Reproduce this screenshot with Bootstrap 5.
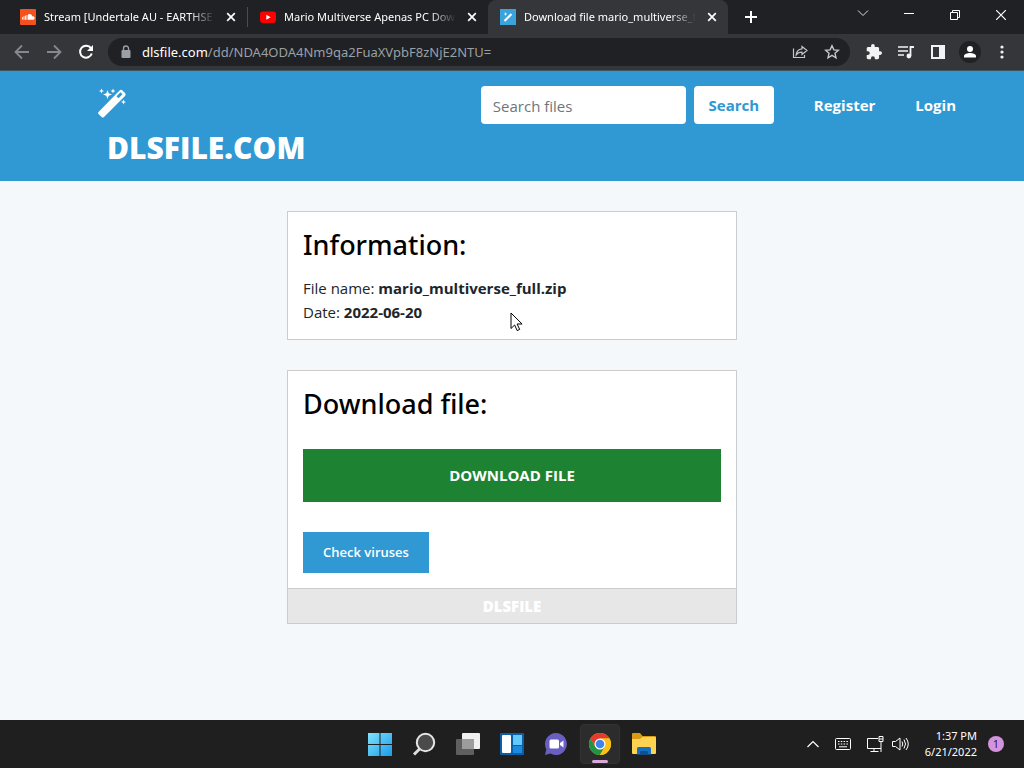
<!DOCTYPE html>
<html lang="en">
<head>
<meta charset="utf-8">
<meta name="viewport" content="width=device-width, initial-scale=1">
<title>Download file mario_multiverse_full.zip</title>
<link href="https://cdn.jsdelivr.net/npm/bootstrap@5.3.0/dist/css/bootstrap.min.css" rel="stylesheet">
<style>
  :root { --brand: #3098d2; --strip: #202124; --tool: #35363a; }
  body { font-family: "Open Sans", "Noto Sans", sans-serif; font-size: 15px; line-height: 24px; background: #f4f8fb; }
  svg { display: block; flex: none; }
  button { color: inherit; }
  .bare { background: none; border: 0; padding: 0; display: flex; align-items: center; justify-content: center; flex: none; }

  /* browser window */
  .tab-strip { background: var(--strip); height: 34px; color: #fff; font-size: 11px; font-family: "Noto Sans", "Open Sans", sans-serif; }
  .page-tab { flex: 0 1 240px; min-width: 0; height: 34px; padding: 0 8px 0 12px; gap: 8px; border-radius: 8px 8px 0 0; }
  .page-tab.divided { border-right: 1px solid #4a4c50; border-image: linear-gradient(transparent 8px, #4a4c50 8px, #4a4c50 26px, transparent 26px) 1; }
  .page-tab.active { background: var(--tool); }
  .tab-title { flex: 1 1 0; min-width: 0; overflow: hidden; white-space: nowrap; -webkit-mask-image: linear-gradient(90deg, #000 85%, transparent); mask-image: linear-gradient(90deg, #000 85%, transparent); }
  .win-btn { width: 46px; height: 28px; }
  .toolbar { background: var(--tool); height: 37px; color: #f1f3f4; padding: 0 6px; border-bottom: 1px solid #3d5560; }
  .tool-btn { width: 32px; height: 32px; }
  .address { background: var(--strip); border-radius: 14px; height: 28px; margin-left: 6px; padding: 0 2px 0 10px; }
  .url { font-size: 13px; font-family: "Noto Sans", "Open Sans", sans-serif; color: #9aa0a6; white-space: nowrap; overflow: hidden; text-decoration: none; }
  .url b { color: #fff; font-weight: 400; }
  .avatar { width: 22px; height: 22px; border-radius: 50%; background: var(--strip); }

  /* site */
  .site-header { background: var(--brand); min-height: 110px; }
  .header-inner { padding: 15px 48px 0 97px; }
  .brand-name { color: #fff; font-size: 30px; line-height: 36px; font-weight: 800; text-decoration: none; margin: 12px 0 0 10px; }
  .search-box { width: 205px; height: 38px; border: 0; border-radius: 4px; font-size: 15px; padding: 2px 12px 0; }
  .search-box::placeholder { color: #6c757d; }
  .search-btn, .search-btn:hover { width: 80px; height: 38px; border: 0; border-radius: 4px; background: #fff; color: var(--brand); font-size: 15px; font-weight: 700; padding: 0; }
  .site-link { color: #fff; font-size: 15px; font-weight: 700; text-decoration: none; line-height: 38px; padding: 0 20px; }
  .column-box { max-width: 450px; }
  .panel { background: #fff; border: 1px solid #ccc; margin-top: 30px; }
  .panel-body { padding: 15px; }
  .panel h2 { font-family: "Noto Sans", "Open Sans", sans-serif; font-size: 27px; line-height: 36px; font-weight: 500; color: #000; margin: 0 0 13px; }
  .download-btn, .download-btn:hover { height: 53px; margin: 27px 0 30px; border: 0; border-radius: 0; background: #1e8233; color: #fff; font-size: 15px; font-weight: 700; }
  .check-btn, .check-btn:hover { height: 41px; width: 126px; padding: 0; border: 0; border-radius: 0; background: var(--brand); color: #fff; font-size: 13px; font-weight: 600; }
  .panel-foot { background: #e7e7e7; border-top: 1px solid #ccc; color: #fff; font-size: 15px; font-weight: 800; line-height: 34px; }
  .pointer { position: absolute; left: 50%; top: 100px; margin-left: -2px; }

  /* desktop taskbar */
  .taskbar { background: #1f1f1f; height: 48px; color: #fff; }
  .side { flex: 1 1 0; min-width: 0; padding: 0 16px 0 8px; }
  .task-btn { width: 40px; height: 40px; border-radius: 4px; }
  .task-btn.open { background: #2c2c2c; border: 1px solid #333; position: relative; }
  .open-mark { position: absolute; bottom: 0; width: 16px; height: 3px; border-radius: 2px; background: #d9a9dc; }
  .clock { font-family: "Noto Sans", "Open Sans", sans-serif; font-size: 11px; line-height: 16px; text-align: right; }
  .count { width: 16px; height: 16px; border-radius: 50%; background: #d394dd; color: #2a1030; font-size: 11px; line-height: 16px; text-align: center; margin: 0 4px 0 11px; }
</style>
</head>
<body class="d-flex flex-column min-vh-100">

<div class="tab-strip d-flex align-items-center ps-2">
  <div class="page-tab divided d-flex align-items-center">
    <svg width="16" height="16" viewBox="0 0 16 16"><rect width="16" height="16" rx="1" fill="#f4511e"/><path d="M2.500 8v2.500M4 7.200v3.600M5.500 6.500v4.300M7 6v4.800" stroke="#fff" stroke-width=".9"/><path d="M8 5.400a3 3 0 0 1 4.300 2 1.750 1.750 0 1 1 .4 3.400H8z" fill="#fff"/></svg>
    <span class="tab-title">Stream [Undertale AU - EARTHSE</span>
    <button class="bare" aria-label="Close tab"><svg width="16" height="16" viewBox="0 0 16 16"><path d="M4.200 4.200l7.600 7.600M11.800 4.200l-7.600 7.600" stroke="#fff" stroke-width="1.700"/></svg></button>
  </div>
  <div class="page-tab d-flex align-items-center">
    <svg width="16" height="16" viewBox="0 0 16 16"><rect y="2.500" width="16" height="11.500" rx="3" fill="#f00"/><path d="M6.300 5.800v5L10.700 8.300z" fill="#fff"/></svg>
    <span class="tab-title">Mario Multiverse Apenas PC Dow</span>
    <button class="bare" aria-label="Close tab"><svg width="16" height="16" viewBox="0 0 16 16"><path d="M4.200 4.200l7.600 7.600M11.800 4.200l-7.600 7.600" stroke="#fff" stroke-width="1.700"/></svg></button>
  </div>
  <div class="page-tab active d-flex align-items-center">
    <svg width="16" height="16" viewBox="0 0 16 16"><rect width="16" height="16" fill="#3ba3dc"/><path d="M4.500 12L11.500 5" stroke="#fff" stroke-width="2.200"/><path d="M5.500 3.500v3M4 5h3" stroke="#fff" stroke-width=".7"/></svg>
    <span class="tab-title">Download file mario_multiverse_f</span>
    <button class="bare" aria-label="Close tab"><svg width="16" height="16" viewBox="0 0 16 16"><path d="M4.200 4.200l7.600 7.600M11.800 4.200l-7.600 7.600" stroke="#fff" stroke-width="1.700"/></svg></button>
  </div>
  <button class="bare ms-3" aria-label="New tab"><svg width="14" height="14" viewBox="0 0 14 14"><path d="M7 1v12M1 7h12" stroke="#fff" stroke-width="2"/></svg></button>
  <div class="ms-auto d-flex">
    <button class="bare win-btn" aria-label="Search tabs"><svg width="12" height="12" viewBox="0 0 12 12"><path d="M1 1.500l5 5 5-5" fill="none" stroke="#ddd"/></svg></button>
    <button class="bare win-btn" aria-label="Minimize"><svg width="10" height="10" viewBox="0 0 10 10"><path d="M0 3.500h10" stroke="#fff"/></svg></button>
    <button class="bare win-btn mb-1" aria-label="Restore"><svg width="10" height="10" viewBox="0 0 10 10"><path d="M.5 2.500h7v7h-7zM2.500 2.500v-2h7v7h-2" fill="none" stroke="#fff"/></svg></button>
    <button class="bare win-btn mb-1" aria-label="Close"><svg width="10" height="10" viewBox="0 0 10 10"><path d="M0 0l10 10M10 0L0 10" stroke="#fff" stroke-width="1.200"/></svg></button>
  </div>
</div>

<div class="toolbar d-flex align-items-center">
  <button class="bare tool-btn" aria-label="Back"><svg width="16" height="16" viewBox="0 0 16 16"><path d="M15 8H2M8 1.500L1.500 8 8 14.500" fill="none" stroke="#85888c" stroke-width="1.800"/></svg></button>
  <button class="bare tool-btn" aria-label="Forward"><svg width="16" height="16" viewBox="0 0 16 16"><path d="M1 8h13M8 1.500L14.500 8 8 14.500" fill="none" stroke="#85888c" stroke-width="1.800"/></svg></button>
  <button class="bare tool-btn" aria-label="Reload"><svg width="16" height="16" viewBox="0 0 16 16"><path d="M13 4.200A6 6 0 1 0 13.800 9.500" fill="none" stroke="#fff" stroke-width="2"/><path d="M15 1v6H9z" fill="#fff"/></svg></button>
  <div class="address d-flex align-items-center flex-grow-1 overflow-hidden">
    <svg class="me-2" width="16" height="16" viewBox="0 0 16 16"><rect x="3.500" y="6" width="9" height="8" rx="1" fill="#9aa0a6"/><path d="M5.500 6.500V4.500a2.500 2.500 0 0 1 5 0v2" fill="none" stroke="#9aa0a6" stroke-width="1.400"/></svg>
    <a class="url flex-grow-1" href="#"><b>dlsfile.com</b>/dd/NDA4ODA4Nm9qa2FuaXVpbF8zNjE2NTU=</a>
    <button class="bare tool-btn" aria-label="Share"><svg width="16" height="16" viewBox="0 0 16 16"><path d="M1.500 4.500v9h11v-2.500" fill="none" stroke="#c4c7ca" stroke-width="1.200"/><path d="M10 2.500l5 4-5 4V8.200c-3 0-4.500.8-5.800 2.600C4.500 7.500 6.300 5.200 10 4.800z" fill="none" stroke="#c4c7ca" stroke-width="1.200"/></svg></button>
    <button class="bare tool-btn" aria-label="Bookmark"><svg width="16" height="16" viewBox="0 0 16 16"><path d="M8 1.700l1.900 4.200 4.500.4-3.400 3 1 4.500L8 11.400l-4 2.400 1-4.500-3.400-3 4.500-.4z" fill="none" stroke="#c4c7ca" stroke-width="1.400"/></svg></button>
  </div>
  <div class="d-flex ms-1 ps-1">
    <button class="bare tool-btn" aria-label="Extensions"><svg width="16" height="16" viewBox="1 1 22 22"><path fill="#f1f3f4" d="M20.500 11H19V7c0-1.100-.9-2-2-2h-4V3.500a2.500 2.500 0 0 0-5 0V5H4c-1.100 0-2 .9-2 2v3.800h1.500a2.700 2.700 0 0 1 0 5.400H2V20c0 1.100.9 2 2 2h3.800v-1.500a2.700 2.700 0 0 1 5.400 0V22H17c1.100 0 2-.9 2-2v-4h1.500a2.500 2.500 0 0 0 0-5z"/></svg></button>
    <button class="bare tool-btn" aria-label="Media controls"><svg width="16" height="16" viewBox="0 0 16 16"><path d="M0 3h10M0 7h10M0 11h6" stroke="#f1f3f4" stroke-width="1.700"/><path d="M12.500 12V3H16" fill="none" stroke="#f1f3f4" stroke-width="1.800"/><circle cx="10.900" cy="12" r="2.400" fill="#f1f3f4"/></svg></button>
    <button class="bare tool-btn" aria-label="Side panel"><svg width="16" height="16" viewBox="0 0 16 16"><path d="M1 1h14v14H1zM3 3v10h6V3z" fill="#f1f3f4" fill-rule="evenodd"/></svg></button>
    <button class="bare tool-btn" aria-label="Profile"><span class="avatar d-flex align-items-center justify-content-center"><svg width="14" height="14" viewBox="0 0 14 14"><circle cx="7" cy="4" r="3" fill="#fff"/><path d="M1 12.500V11c0-2 3.500-3 6-3s6 1 6 3v1.500z" fill="#fff"/></svg></span></button>
    <button class="bare tool-btn" aria-label="Menu"><svg width="16" height="16" viewBox="0 0 16 16" fill="#f1f3f4"><circle cx="8" cy="3" r="1.600"/><circle cx="8" cy="8" r="1.600"/><circle cx="8" cy="13" r="1.600"/></svg></button>
  </div>
</div>

<header class="site-header">
  <div class="header-inner d-flex flex-wrap justify-content-between align-items-start">
    <div class="d-flex flex-column">
      <svg width="32" height="32" viewBox="0 0 32 32" aria-hidden="true"><path fill="#fff" fill-rule="evenodd" d="M1.500 26L22.500 4.500q1.500-1.500 3 0l2.500 2.500q1.500 1.500 0 3L7 31q-1.200 1-2.400 0L1.500 28q-1-1 0-2zM19.500 10.200l2 2 4-4-2-2z"/><path fill="#fff" d="M10.500 4l1.200 3.300L15 8.500l-3.300 1.200L10.500 13 9.300 9.700 6 8.500l3.300-1.200zM4.500 2.500l.7 1.800 1.800.7-1.800.7-.7 1.800-.7-1.800L2 5l1.800-.7zM16 2.500l.7 1.800 1.800.7-1.800.7-.7 1.800-.7-1.800-1.800-.7 1.800-.7zM26.500 13.500l.7 1.800 1.800.7-1.800.7-.7 1.800-.7-1.800-1.800-.7 1.800-.7z"/></svg>
      <a class="brand-name" href="#">DLSFILE.COM</a>
    </div>
    <div class="d-flex flex-wrap">
      <form class="d-flex gap-2 me-3" role="search">
        <input class="form-control search-box" type="search" placeholder="Search files" aria-label="Search files">
        <button class="btn search-btn" type="button">Search</button>
      </form>
      <nav class="d-flex ms-1">
        <a class="site-link" href="#">Register</a>
        <a class="site-link" href="#">Login</a>
      </nav>
    </div>
  </div>
</header>

<main class="flex-grow-1 pb-4">
  <div class="column-box mx-auto">
    <section class="panel position-relative">
      <div class="panel-body">
        <h2>Information:</h2>
        <div>File name: <b>mario_multiverse_full.zip</b></div>
        <div>Date: <b>2022-06-20</b></div>
      </div>
      <svg class="pointer" width="13" height="20" viewBox="0 0 13 20" aria-hidden="true"><path d="M1 1v15.500l3.600-3.500 2.600 5.600 2.500-1.200-2.600-5.400h5z" fill="#fff" stroke="#000" stroke-width="1"/></svg>
    </section>
    <section class="panel">
      <div class="panel-body">
        <h2>Download file:</h2>
        <button class="btn download-btn w-100 d-block" type="button">DOWNLOAD FILE</button>
        <button class="btn check-btn d-block" type="button">Check viruses</button>
      </div>
      <div class="panel-foot text-center">DLSFILE</div>
    </section>
  </div>
</main>

<footer class="taskbar d-flex align-items-center">
  <div class="side"></div>
  <div class="d-flex gap-1">
    <button class="bare task-btn" aria-label="Start"><svg width="24" height="24" viewBox="0 0 24 24"><defs><linearGradient id="win" x1="0" y1="0" x2="1" y2="1"><stop offset="0" stop-color="#7fe3fb"/><stop offset="1" stop-color="#1a9bea"/></linearGradient></defs><path fill="url(#win)" d="M0 1h11.500v11H0zM12.500 1H24v11H12.500zM0 13h11.500v11H0zM12.500 13H24v11H12.500z"/></svg></button>
    <button class="bare task-btn" aria-label="Search"><svg width="24" height="24" viewBox="0 0 24 24"><path d="M2 22.500l6.500-6.500" stroke="#dedede" stroke-width="3"/><circle cx="13.500" cy="10.500" r="8.700" fill="#4b4b4b" stroke="#e6e6e6" stroke-width="2"/></svg></button>
    <button class="bare task-btn" aria-label="Task view"><svg width="26" height="24" viewBox="0 0 26 24"><rect x="7" y="1" width="18" height="16" rx="1" fill="#efefef"/><rect x="1" y="7" width="18" height="16" rx="1" fill="#6b6b6b" opacity=".85"/><rect x="7" y="7" width="12" height="10" fill="#9c9c9c"/></svg></button>
    <button class="bare task-btn" aria-label="Widgets"><svg width="24" height="24" viewBox="0 0 24 24"><rect y="1" width="24" height="22" rx="1" fill="#0b5ea8"/><rect x="2" y="3" width="9" height="18" rx="1" fill="#fff"/><rect x="13" y="3" width="9" height="10" fill="#63c8fa"/><rect x="13" y="14" width="9" height="7" fill="#1b8be0"/></svg></button>
    <button class="bare task-btn" aria-label="Chat"><svg width="24" height="24" viewBox="0 0 24 24"><path d="M12 1a11 11 0 1 1-5.500 20.600L1 23l1.300-5.800A11 11 0 0 1 12 1z" fill="#6a5fc0"/><rect x="5.500" y="7.500" width="9.500" height="9" rx="1.500" fill="#fff"/><path d="M16 11l3.500-2.500v7L16 13z" fill="#fff"/></svg></button>
    <button class="bare task-btn open" aria-label="Chrome"><svg width="24" height="24" viewBox="0 0 24 24"><circle cx="12" cy="12" r="11" fill="#fbc116"/><path d="M2.470 6.500A11 11 0 0 1 21.530 6.500H12L7.240 14.750z" fill="#e33b2e"/><path d="M2.470 6.500A11 11 0 0 0 12 23l4.760-8.250H7.240z" fill="#229342"/><path d="M21.530 6.500A11 11 0 0 1 12 23l4.760-8.250A5.500 5.500 0 0 0 12 6.500z" fill="#fbc116"/><circle cx="12" cy="12" r="5.500" fill="#fff"/><circle cx="12" cy="12" r="4.300" fill="#3f83ee"/></svg><span class="open-mark"></span></button>
    <button class="bare task-btn" aria-label="File Explorer"><svg width="26" height="24" viewBox="0 0 26 24"><path d="M1 2q0-1 1-1h7l2.500 3H24q1 0 1 1v10H1z" fill="#d99b16"/><path d="M1 7h8l2.500-2H24q1 0 1 1v15q0 1-1 1H2q-1 0-1-1z" fill="#fdd351"/><path d="M6 22.500v-6q0-1.500 1.500-1.500h11q1.500 0 1.500 1.500v6z" fill="#1670bf"/><path d="M9 22.500V20q0-1 1-1h6q1 0 1 1v2.500z" fill="#0b4f94"/></svg></button>
  </div>
  <div class="side d-flex align-items-center justify-content-end">
    <button class="bare me-3" aria-label="Show hidden icons"><svg width="12" height="12" viewBox="0 0 12 12"><path d="M.5 9L6 3.500 11.500 9" fill="none" stroke="#fff" stroke-width="1.200"/></svg></button>
    <button class="bare me-3" aria-label="Touch keyboard"><svg width="16" height="12" viewBox="0 0 16 12"><rect x=".5" y=".5" width="15" height="11" rx="1" fill="none" stroke="#fff"/><path d="M3 3.500h10M3 6h10" stroke="#fff" stroke-dasharray="1.500 1.300"/><path d="M4 8.800h8" stroke="#fff"/></svg></button>
    <button class="bare me-2" aria-label="Network"><svg width="17" height="17" viewBox="0 0 17 17"><path d="M11 2.500H.5v10H14M7 12.500v3M3.500 15.500h8" fill="none" stroke="#fff"/><path d="M12 .5h4v5h-4zM12 3h4M14 5.500V16" fill="none" stroke="#fff"/></svg></button>
    <button class="bare me-3" aria-label="Volume"><svg width="17" height="16" viewBox="0 0 17 16"><path d="M.5 5.500h3L8 2v12l-4.500-3.500h-3z" fill="none" stroke="#fff"/><path d="M10 5.500q1.500 2.500 0 5M12 3.500q3 4.500 0 9M14 2q4.500 6 0 12" fill="none" stroke="#fff"/></svg></button>
    <div class="clock">1:37 PM<br>6/21/2022</div>
    <div class="count">1</div>
  </div>
</footer>

<script src="https://cdn.jsdelivr.net/npm/bootstrap@5.3.0/dist/js/bootstrap.bundle.min.js"></script>
</body>
</html>
